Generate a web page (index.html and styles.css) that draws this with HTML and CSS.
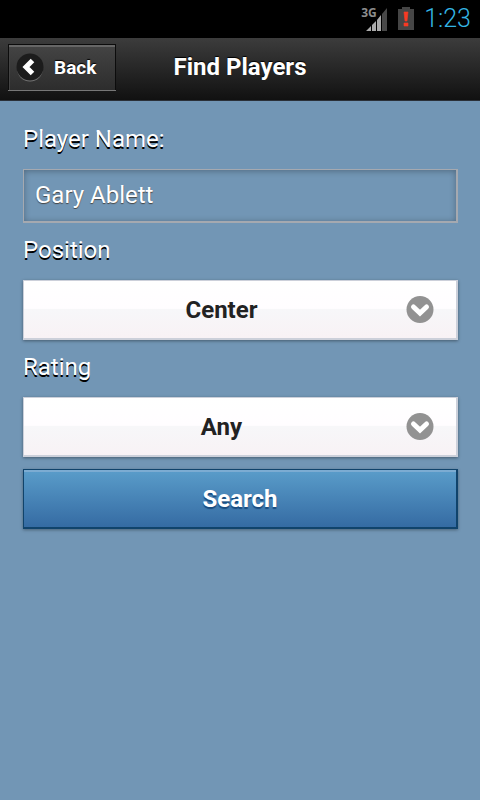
FILE: index.html
```html
<!DOCTYPE html>
<html lang="en">
<head>
<meta charset="utf-8">
<meta name="viewport" content="width=device-width, initial-scale=1">
<title>Find Players</title>
<link rel="stylesheet" href="styles.css">
</head>
<body>
<div class="status">
  <div class="signal">
    <span class="network">3G</span>
    <svg class="bars" width="22" height="23" viewBox="0 0 22 23" aria-hidden="true">
      <path d="M0 23 5 18V23ZM6 17 10 13V23H6ZM11 12 15 7V23H11Z" fill="#aaa"/>
      <path d="M16 6 21 0V23H16Z" fill="#484848"/>
    </svg>
  </div>
  <svg class="battery" width="16" height="24" viewBox="0 0 16 24" aria-hidden="true">
    <path d="M4 0H12V2H16V23H0V2H4Z" fill="#454545"/>
    <path d="M6 5H10L9 14H7ZM6 16H10V19H6Z" fill="#f83a24" stroke="#f83a24" stroke-width="0.600"/>
  </svg>
  <span class="clock">1:23</span>
</div>
<header class="header">
  <button class="back" type="button">
    <svg width="28" height="30" viewBox="0 0 28 30" aria-hidden="true">
      <circle cx="14" cy="15.500" r="13" fill="#777"/>
      <circle cx="14" cy="14" r="13.500" fill="#1c1c1c"/>
      <path d="M16.500 7.500 10 14 16.500 20.500" fill="none" stroke="#fff" stroke-width="5"/>
    </svg>
    <span>Back</span>
  </button>
  <h1 class="title">Find Players</h1>
</header>
<main>
  <form class="form">
    <label class="label" for="name">Player Name:</label>
    <input class="text" id="name" type="text" value="Gary Ablett">
    <label class="label" for="position">Position</label>
    <div class="picker">
      <select class="select" id="position"><option>Center</option></select>
      <svg class="arrow" width="28" height="28" viewBox="0 0 28 28" aria-hidden="true">
        <circle cx="14" cy="13.500" r="13.500" fill="#929292"/>
        <path d="M7.500 11 14 17 20.500 11" fill="none" stroke="#fff" stroke-width="5" stroke-linecap="round"/>
      </svg>
    </div>
    <label class="label" for="rating">Rating</label>
    <div class="picker">
      <select class="select" id="rating"><option>Any</option></select>
      <svg class="arrow" width="28" height="28" viewBox="0 0 28 28" aria-hidden="true">
        <circle cx="14" cy="13.500" r="13.500" fill="#929292"/>
        <path d="M7.500 11 14 17 20.500 11" fill="none" stroke="#fff" stroke-width="5" stroke-linecap="round"/>
      </svg>
    </div>
    <button class="search" type="button">Search</button>
  </form>
</main>
</body>
</html>
```
FILE: styles.css
```css
* {
  box-sizing: border-box;
}

body {
  margin: 0;
  min-height: 100vh;
  background: #7296b5;
  font-family: Roboto, "Liberation Sans", sans-serif;
  font-size: 24px;
  color: #fff;
}

.status {
  display: flex;
  justify-content: flex-end;
  align-items: center;
  gap: 10px;
  height: 38px;
  padding-right: 9px;
  background: #000;
}

.signal {
  display: flex;
  position: relative;
  width: 27px;
  justify-content: flex-end;
}

.network {
  position: absolute;
  top: -2px;
  left: 0;
  font: 700 12px/14px "Open Sans", "Liberation Sans", sans-serif;
  color: #8d8d8d;
}

.clock {
  font-size: 25px;
  line-height: 40px;
  font-weight: 300;
  color: #33b5e5;
}

.header {
  display: grid;
  grid-template-columns: 1fr auto 1fr;
  align-items: start;
  height: 63px;
  padding: 6px 8px;
  border-bottom: 1px solid #2a3038;
  background: linear-gradient(#3c3c3c, #111);
}

.back {
  display: flex;
  justify-self: start;
  align-items: center;
  gap: 10px;
  width: 108px;
  height: 46px;
  padding: 0 7px;
  border: 1px solid #0c0c0c;
  border-bottom: 0;
  border-radius: 0;
  background: linear-gradient(#444, #2d2d2d);
  box-shadow: inset 0 2px #666, inset 1px 0 #444, 0 1px #777;
  font: 700 19px Roboto, "Liberation Sans", sans-serif;
  color: #fff;
  text-shadow: 0 -1px 1px #000;
}

.title {
  margin: 0;
  font-size: 24px;
  line-height: 46px;
  font-weight: 700;
  text-shadow: 0 -1px 1px #000;
}

.form {
  display: flex;
  flex-direction: column;
  padding: 23px 22px 22px 23px;
}

.label {
  margin-bottom: 15px;
  line-height: 30px;
  text-shadow: 0 2px 0 #000;
}

.text {
  width: 100%;
  height: 54px;
  margin-bottom: 12px;
  padding: 0 11px 2px;
  border: 1px solid #a5a9b0;
  border-width: 1px 2px 2px 1px;
  border-radius: 0;
  outline: 0;
  background: transparent;
  box-shadow: inset 0 1px 6px rgba(0, 0, 0, 0.3);
  font: 24px Roboto, "Liberation Sans", sans-serif;
  color: #fff;
  text-shadow: 0 1px 1px #444;
}

.picker {
  position: relative;
  margin-bottom: 12px;
}

.select {
  appearance: none;
  display: block;
  width: 100%;
  height: 60px;
  padding: 0 60px 0 23px;
  border: 1px solid #ccd0da;
  border-width: 1px 2px 2px 1px;
  border-radius: 0;
  background: linear-gradient(#fff, #fffdff 48%, #f7f7f9 50%, #f8f2f5);
  box-shadow: 0 1px 3px rgba(0, 0, 0, 0.4);
  font: 700 24px Roboto, "Liberation Sans", sans-serif;
  color: #222;
  text-align: center;
  text-align-last: center;
}

.arrow {
  position: absolute;
  top: 16px;
  right: 24px;
  pointer-events: none;
}

.search {
  width: 100%;
  height: 60px;
  border: 1px solid #10436b;
  border-width: 1px 2px 2px 1px;
  border-radius: 0;
  background: linear-gradient(#5a9dca, #356ba3);
  box-shadow: inset 0 2px #7cacd2, 0 1px 3px rgba(0, 0, 0, 0.35);
  font: 700 24px Roboto, "Liberation Sans", sans-serif;
  color: #fff;
  text-shadow: 0 2px 1px #194b7e;
}
```
